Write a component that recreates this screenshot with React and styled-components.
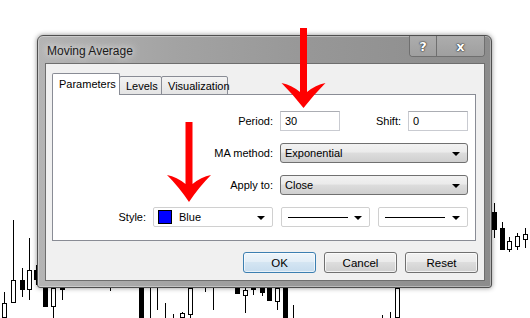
import React from 'react';
import styled, { createGlobalStyle, css } from 'styled-components';

const GlobalStyle = createGlobalStyle`
    html, body {
        margin: 0;
        padding: 0;
        background: #ffffff;
    }
    body {
        font-family: "Liberation Sans", Arial, sans-serif;
        font-size: 11px;
        color: #000;
    }
`;

const Screen = styled.div`
    position: relative;
    width: 530px;
    height: 318px;
    overflow: hidden;
    background: #ffffff;
`;

const Chart = styled.svg`
    position: absolute;
    left: 0;
    top: 0;
`;

const Overlay = styled.svg`
    position: absolute;
    left: 0;
    top: 0;
    pointer-events: none;
`;

const Window = styled.div`
    position: absolute;
    left: 37px;
    top: 35px;
    width: 455px;
    height: 253px;
    box-sizing: border-box;
    display: flex;
    flex-direction: column;
    border: 1px solid #4f4f4f;
    border-radius: 6px 6px 3px 3px;
    background: linear-gradient(90deg, #b4b4b4 0%, #a3a3a3 30%, #979797 60%, #8c8c8c 100%);
    box-shadow: 0 0 5px rgba(0, 0, 0, 0.45), inset 0 0 0 1px rgba(255, 255, 255, 0.35);
    padding: 0 6px 6px 7px;
`;

const TitleBar = styled.div`
    height: 27px;
    display: flex;
    align-items: flex-start;
    flex: none;
`;

const Title = styled.div`
    font-size: 12px;
    color: #1a1a1a;
    padding: 8px 0 0 2px;
    text-shadow: 0 0 6px #e6e6e6, 0 0 10px #dcdcdc;
`;

const CaptionButtons = styled.div`
    margin-left: auto;
    display: flex;
    height: 20px;
    border: 1px solid #6f6f6f;
    border-top: none;
    border-radius: 0 0 4px 4px;
    overflow: hidden;
    box-shadow: inset 0 0 0 1px rgba(255, 255, 255, 0.3);
`;

const CaptionButton = styled.div`
    width: ${p => p.$w}px;
    display: flex;
    align-items: center;
    justify-content: center;
    font-family: "DejaVu Sans", sans-serif;
    font-weight: bold;
    font-size: 13px;
    color: #ffffff;
    background: linear-gradient(180deg, #adadad, #9f9f9f);
    text-shadow: 0 0 1px #2b2b2b, 0 0 1px #2b2b2b, 0 0 2px #444;
    & + & {
        border-left: 1px solid #6f6f6f;
    }
`;

const Client = styled.div`
    flex: 1;
    background: #f0f0f0;
    border: 1px solid #6e6e6e;
    padding: 9px 8px 0 6px;
    display: flex;
    flex-direction: column;
`;

const TabStrip = styled.div`
    display: flex;
    align-items: flex-end;
    height: 22px;
    margin-bottom: -1px;
    position: relative;
    z-index: 1;
`;

const Tab = styled.div`
    box-sizing: border-box;
    height: ${p => (p.$active ? 22 : 19)}px;
    width: ${p => p.$w}px;
    border: 1px solid #898c95;
    border-bottom: ${p => (p.$active ? 'none' : '1px solid #898c95')};
    border-radius: 2px 2px 0 0;
    padding-left: 6px;
    display: flex;
    align-items: center;
    ${p => p.$active
        ? css`background: #ffffff; padding-bottom: 1px;`
        : css`background: linear-gradient(180deg, #f3f3f3, #e4e4e4); margin-left: -1px;`}
`;

const Panel = styled.div`
    height: 147px;
    box-sizing: border-box;
    width: 424px;
    background: #ffffff;
    border: 1px solid #898c95;
    padding-top: 16px;
    display: flex;
    flex-direction: column;
    gap: 12px;
`;

const Row = styled.div`
    display: flex;
    align-items: center;
    height: 20px;
`;

const Label = styled.div`
    width: ${p => p.$w}px;
    text-align: right;
    padding-right: 7px;
    box-sizing: border-box;
    flex: none;
`;

const Edit = styled.div`
    box-sizing: border-box;
    width: ${p => p.$w}px;
    height: 20px;
    border: 1px solid #c9cbd1;
    border-top-color: #abadb3;
    background: #fff;
    padding: 0 4px;
    display: flex;
    align-items: center;
    flex: none;
`;

const Combo = styled.div`
    box-sizing: border-box;
    width: ${p => p.$w}px;
    height: 20px;
    flex: none;
    position: relative;
    display: flex;
    align-items: center;
    padding: 0 4px;
    margin-left: ${p => p.$gap || 0}px;
    ${p => p.$flat
        ? css`
            background: #fff;
            border: 1px solid #d0d0d0;
            border-radius: 2px;
        `
        : css`
            background: linear-gradient(180deg, #f2f2f2 0%, #ebebeb 45%, #dddddd 50%, #cfcfcf 100%);
            border: 1px solid #707070;
            border-radius: 3px;
        `}
    &::after {
        content: '';
        position: absolute;
        right: 7px;
        top: 8px;
        border-left: 4px solid transparent;
        border-right: 4px solid transparent;
        border-top: 4px solid #000;
    }
`;

const Swatch = styled.span`
    width: 12px;
    height: 12px;
    background: #0000ff;
    border: 1px solid #000;
    margin-right: 7px;
`;

const LineSample = styled.span`
    width: 60px;
    height: 1px;
    background: #000;
    margin-left: 2px;
`;

const Footer = styled.div`
    display: flex;
    justify-content: flex-end;
    gap: 8px;
    margin-top: 11px;
    margin-right: -2px;
`;

const Button = styled.div`
    box-sizing: border-box;
    width: 73px;
    height: 21px;
    display: flex;
    align-items: center;
    justify-content: center;
    border-radius: 3px;
    font-size: 11.5px;
    ${p => p.$default
        ? css`
            border: 1px solid #3c7fb1;
            background: linear-gradient(180deg, #eef5fa 0%, #e3eef7 45%, #d4e5f2 50%, #c6dcee 100%);
            box-shadow: inset 0 0 0 1px rgba(255, 255, 255, 0.6);
        `
        : css`
            border: 1px solid #707070;
            background: linear-gradient(180deg, #f2f2f2 0%, #ebebeb 45%, #dddddd 50%, #cfcfcf 100%);
            box-shadow: inset 0 0 0 1px rgba(255, 255, 255, 0.7);
        `}
`;

// x, wick top, wick bottom, body top, body bottom, filled
const candles = [
    [4, 292, 318, 303, 318, false],
    [13, 220, 300, 280, 303, false],
    [22, 268, 297, 280, 290, true],
    [29, 238, 300, 270, 290, false],
    [36, 265, 285, 270, 280, true],
    [45, 288, 305, 288, 307, true],
    [53, 288, 318, 288, 307, false],
    [62, 288, 300, 288, 290, true],
    [110, 288, 291, 288, 289, true],
    [141, 288, 318, 288, 318, true],
    [150, 288, 318, 300, 300, true],
    [157, 288, 310, 295, 295, true],
    [165, 303, 318, 310, 310, true],
    [173, 314, 318, 316, 316, true],
    [182, 312, 318, 313, 318, false],
    [190, 288, 318, 288, 315, false],
    [205, 288, 292, 289, 289, true],
    [213, 288, 310, 290, 290, true],
    [237, 288, 294, 288, 294, true],
    [245, 288, 313, 290, 296, false],
    [253, 288, 295, 288, 290, true],
    [262, 288, 296, 288, 293, true],
    [269, 288, 301, 288, 301, true],
    [277, 288, 310, 288, 302, false],
    [285, 288, 318, 288, 318, true],
    [293, 305, 318, 310, 310, true],
    [382, 315, 318, 316, 316, true],
    [390, 312, 318, 314, 314, true],
    [397, 288, 318, 288, 318, false],
    [494, 203, 238, 212, 230, true],
    [502, 222, 250, 228, 250, true],
    [509, 237, 252, 241, 250, false],
    [517, 233, 250, 236, 247, false],
    [525, 228, 248, 234, 240, false],
];

const ChartLayer = () => (
    <Chart width="530" height="318">
        {candles.map(([x, hi, lo, top, bot, filled], i) => (
            <g key={i}>
                <line x1={x + 0.5} y1={hi} x2={x + 0.5} y2={lo} stroke="#000" strokeWidth="1" />
                {bot - top > 1 && (
                    filled
                        ? <rect x={x - 2} y={top} width="5" height={bot - top} fill="#000" />
                        : <rect x={x - 1.5} y={top + 0.5} width="4" height={bot - top - 1} fill="#fff" stroke="#000" strokeWidth="1" />
                )}
            </g>
        ))}
    </Chart>
);

const arrowPath = (cx, top, headY, tipY, half) =>
    `M${cx - 3.5},${top} L${cx + 3.5},${top} L${cx + 3.5},${headY + 9} ` +
    `Q${cx + 12},${headY + 2} ${cx + half},${headY} ` +
    `Q${cx + 10},${headY + 12} ${cx},${tipY} ` +
    `Q${cx - 10},${headY + 12} ${cx - half},${headY} ` +
    `Q${cx - 12},${headY + 2} ${cx - 3.5},${headY + 9} Z`;

const Arrows = () => (
    <Overlay width="530" height="318">
        <path d={arrowPath(303.5, 28, 83, 108, 22)} fill="#ff0000" />
        <path d={arrowPath(189, 122, 175, 202, 22)} fill="#ff0000" />
    </Overlay>
);

const App = () => {
    return (
        <>
            <GlobalStyle />
            <Screen>
                <ChartLayer />
                <Window>
                    <TitleBar>
                        <Title>Moving Average</Title>
                        <CaptionButtons>
                            <CaptionButton $w={26}>?</CaptionButton>
                            <CaptionButton $w={47}>x</CaptionButton>
                        </CaptionButtons>
                    </TitleBar>
                    <Client>
                        <TabStrip>
                            <Tab $active $w={68}>Parameters</Tab>
                            <Tab $w={43}>Levels</Tab>
                            <Tab $w={67}>Visualization</Tab>
                        </TabStrip>
                        <Panel>
                            <Row>
                                <Label $w={227}>Period:</Label>
                                <Edit $w={60}>30</Edit>
                                <Label $w={68}>Shift:</Label>
                                <Edit $w={60}>0</Edit>
                            </Row>
                            <Row>
                                <Label $w={227}>MA method:</Label>
                                <Combo $w={188}>Exponential</Combo>
                            </Row>
                            <Row>
                                <Label $w={227}>Apply to:</Label>
                                <Combo $w={188}>Close</Combo>
                            </Row>
                            <Row>
                                <Label $w={100}>Style:</Label>
                                <Combo $flat $w={120}>
                                    <Swatch />
                                    Blue
                                </Combo>
                                <Combo $flat $w={89} $gap={8}>
                                    <LineSample />
                                </Combo>
                                <Combo $flat $w={90} $gap={8}>
                                    <LineSample />
                                </Combo>
                            </Row>
                        </Panel>
                        <Footer>
                            <Button $default>OK</Button>
                            <Button>Cancel</Button>
                            <Button>Reset</Button>
                        </Footer>
                    </Client>
                </Window>
                <Arrows />
            </Screen>
        </>
    );
};

export default App;
